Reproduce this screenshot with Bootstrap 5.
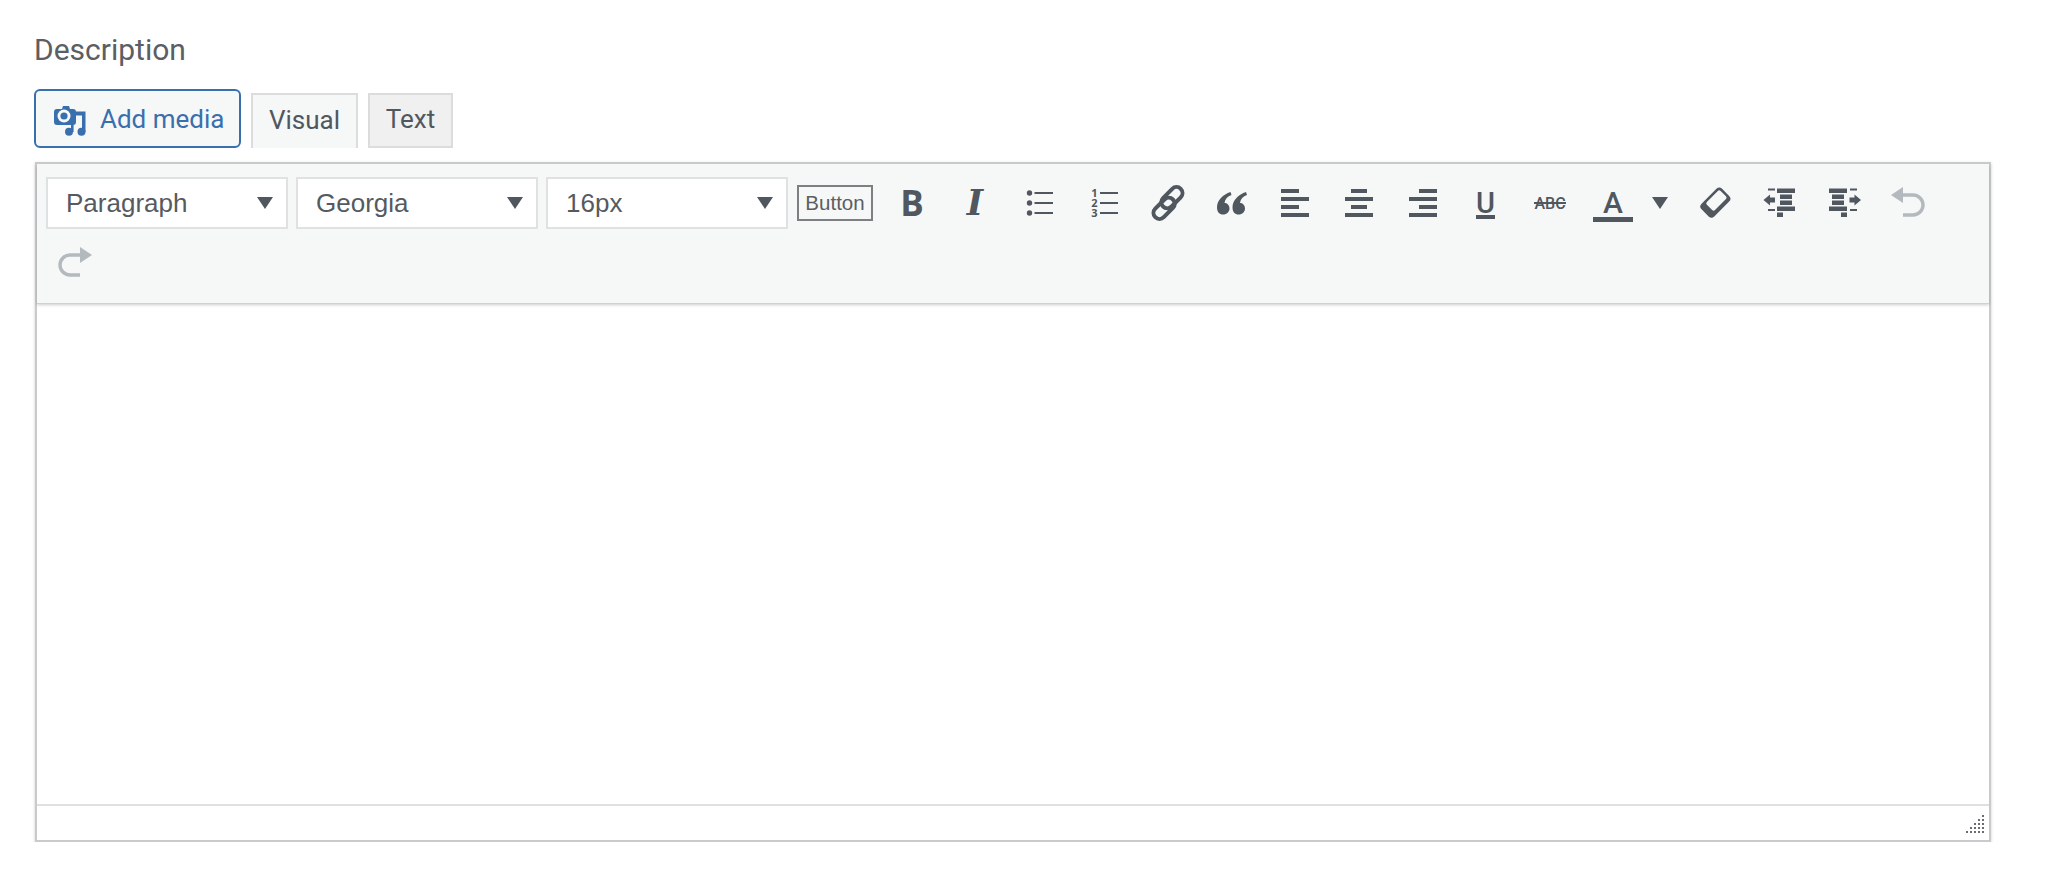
<!DOCTYPE html>
<html lang="en">
<head>
  <meta charset="UTF-8">
  <title>Description editor</title>
  <link href="https://cdn.jsdelivr.net/npm/bootstrap@5.3.0/dist/css/bootstrap.min.css" rel="stylesheet">
  <style>
    body {
      background: #fff;
      color: #50575e;
      font-family: Roboto, sans-serif;
    }
    .page-wrap {
      padding: 31px 57px 0 35px;
    }
    .field-label {
      font-size: 30px;
      line-height: 38px;
      margin-bottom: 20px;
      margin-left: -1px;
      color: #5b5e63;
    }
    .editor-tools {
      margin-bottom: 14px;
      height: 59px;
    }
    .add-media {
      width: 207px;
      height: 59px;
      margin-left: -1px;
      margin-right: 10px;
      padding: 2px 0 0 17px;
      background: #f6f7f7;
      border: 2px solid #3a6fae;
      border-radius: 6px;
      color: #3a6fae;
      font-size: 26px;
      gap: 13px;
    }
    .mode-tab {
      height: 55px;
      padding-bottom: 3px;
      font-size: 26px;
      border: 2px solid #dcdcde;
      color: #50575e;
      background: #f0f0f1;
    }
    .mode-tab.is-on {
      width: 107px;
      background: #f6f7f7;
      border-bottom: 0;
      margin-right: 10px;
    }
    .mode-tab.is-off {
      width: 85px;
    }
    .editor-box {
      border: 2px solid #c9cacc;
      box-shadow: 0 1px 3px rgba(0, 0, 0, .2);
      height: 680px;
    }
    .editor-bar {
      background: #f6f7f7;
      padding: 9px 9px 10px 9px;
      box-shadow: 0 1px 0 #cfd0d1, 0 2px 3px rgba(0, 0, 0, .2);
      height: 139px;
      position: relative;
    }
    .bar-item {
      height: 60px;
    }
    .fake-select {
      width: 242px;
      height: 52px;
      margin-right: 8px;
      padding: 0 13px 0 18px;
      background: #fff;
      border: 2px solid #e0e1e2;
      font-family: "Liberation Sans", Arial, sans-serif;
      font-size: 26px;
      color: #555a60;
    }
    .caret-down {
      width: 0;
      height: 0;
      border-left: 8px solid transparent;
      border-right: 8px solid transparent;
      border-top: 12px solid #50575e;
    }
    .plain-btn {
      width: 76px;
      height: 36px;
      margin: 0 7px 0 1px;
      border: 2px solid #7d7f82;
      font-family: "Liberation Sans", Arial, sans-serif;
      font-size: 20.5px;
      color: #5b5e63;
    }
    .tool-btn {
      width: 64px;
    }
    .tool-btn.with-caret {
      width: 100px;
      padding-left: 9px;
      gap: 19px;
    }
    .tool-btn svg {
      display: block;
    }
    .bold-glyph {
      font-family: "Open Sans", sans-serif;
      font-weight: 700;
      font-size: 35px;
      line-height: 40px;
      color: #50575e;
    }
    .italic-glyph {
      font-family: "DejaVu Serif", serif;
      font-weight: 700;
      font-style: italic;
      font-size: 35px;
      line-height: 40px;
      margin-right: 2px;
      color: #50575e;
    }
    .ol-nums {
      width: 8px;
      margin-right: 1px;
      font-family: "Open Sans", sans-serif;
      font-weight: 700;
      font-size: 11px;
      line-height: 10px;
      text-align: center;
      color: #50575e;
    }
    .ico-dark { fill: #50575e; }
    .ico-line { fill: none; stroke: #50575e; }
    .ico-off { fill: none; stroke: #b4b9be; stroke-width: 3.4; }
    .ico-off-fill { fill: #b4b9be; }
    .editor-body {
      height: 501px;
      background: #fff;
    }
    .editor-foot {
      height: 36px;
      border-top: 2px solid #dfe0e1;
      background: #fff;
      padding: 9px 5px 0 0;
    }
  </style>
</head>
<body>

<div class="page-wrap">
  <div class="field-label">Description</div>

  <div class="editor-tools d-flex align-items-end">
    <button type="button" class="add-media d-flex align-items-center">
      <svg width="34" height="32" viewBox="0 0 34 32">
        <g fill="#3a6fae">
          <path d="M6 5h3l1-3h6l1 3h3a3 3 0 0 1 3 3v10a3 3 0 0 1-3 3H4a3 3 0 0 1-3-3V8a3 3 0 0 1 3-3z"/>
          <path d="M22 7.500h10.500V28h-3.500V11.500h-7z"/>
          <circle cx="28.500" cy="27.700" r="4"/>
          <circle cx="16" cy="27.700" r="4"/>
          <rect x="18" y="20" width="2.600" height="8"/>
        </g>
        <circle cx="11" cy="12" r="6.500" fill="#f6f7f7"/>
        <circle cx="11" cy="12" r="3.600" fill="#3a6fae"/>
      </svg>
      <span>Add media</span>
    </button>
    <div class="mode-tab is-on d-flex align-items-center justify-content-center">Visual</div>
    <div class="mode-tab is-off d-flex align-items-center justify-content-center">Text</div>
  </div>

  <div class="editor-box">
    <div class="editor-bar d-flex flex-wrap align-content-start">
      <div class="bar-item d-flex align-items-center">
        <div class="fake-select d-flex align-items-center justify-content-between"><span>Paragraph</span><i class="caret-down"></i></div>
      </div>
      <div class="bar-item d-flex align-items-center">
        <div class="fake-select d-flex align-items-center justify-content-between"><span>Georgia</span><i class="caret-down"></i></div>
      </div>
      <div class="bar-item d-flex align-items-center">
        <div class="fake-select d-flex align-items-center justify-content-between"><span>16px</span><i class="caret-down"></i></div>
      </div>
      <div class="bar-item d-flex align-items-center">
        <div class="plain-btn d-flex align-items-center justify-content-center">Button</div>
      </div>

      <!-- bold -->
      <div class="bar-item tool-btn d-flex align-items-center justify-content-center">
        <span class="bold-glyph">B</span>
      </div>
      <!-- italic -->
      <div class="bar-item tool-btn d-flex align-items-center justify-content-center">
        <span class="italic-glyph">I</span>
      </div>
      <!-- bullet list -->
      <div class="bar-item tool-btn d-flex align-items-center justify-content-center">
        <svg width="40" height="40" viewBox="0 0 40 40">
          <g class="ico-dark"><circle cx="9.500" cy="10" r="2.700"/><circle cx="9.500" cy="20" r="2.700"/><circle cx="9.500" cy="30" r="2.700"/></g>
          <path class="ico-line" stroke-width="2" d="M14.500 10H33M14.500 20H33M14.500 30H33"/>
        </svg>
      </div>
      <!-- numbered list -->
      <div class="bar-item tool-btn d-flex align-items-center justify-content-center">
        <span class="ol-nums">1 2 3</span>
        <svg width="18" height="30" viewBox="0 0 18 30">
          <path class="ico-line" stroke-width="2" d="M0 5H18M0 15H18M0 25H18"/>
        </svg>
      </div>
      <!-- link -->
      <div class="bar-item tool-btn d-flex align-items-center justify-content-center">
        <svg width="40" height="40" viewBox="0 0 40 40">
          <g transform="rotate(-45 20 20)" class="ico-line" stroke-width="4">
            <rect x="1" y="15" width="25" height="12" rx="6"/>
            <rect x="14" y="13" width="25" height="12" rx="6"/>
          </g>
        </svg>
      </div>
      <!-- quote -->
      <div class="bar-item tool-btn d-flex align-items-center justify-content-center">
        <svg width="40" height="40" viewBox="0 0 40 40" class="ico-dark">
          <path d="M18.500 9C11 11.500 5 17 5 24.500 5 29 7.500 31.500 11 31.500c4 0 6.500-2.700 6.500-6 0-3.500-2.500-5.500-5-5.500.5-4 3-6.500 7-8z"/>
          <path d="M34 9c-7.500 2.500-13.500 8-13.500 15.500 0 4.500 2.500 7 6 7 4 0 6.500-2.700 6.500-6 0-3.500-2.500-5.500-5-5.500.5-4 3-6.500 7-8z"/>
        </svg>
      </div>
      <!-- align left -->
      <div class="bar-item tool-btn d-flex align-items-center justify-content-center">
        <svg width="40" height="40" viewBox="0 0 40 40" class="ico-dark">
          <rect x="5" y="6" width="18" height="4"/><rect x="5" y="14" width="28" height="4"/><rect x="5" y="22" width="18" height="4"/><rect x="5" y="30" width="28" height="4"/>
        </svg>
      </div>
      <!-- align center -->
      <div class="bar-item tool-btn d-flex align-items-center justify-content-center">
        <svg width="40" height="40" viewBox="0 0 40 40" class="ico-dark">
          <rect x="11" y="6" width="16" height="4"/><rect x="5" y="14" width="28" height="4"/><rect x="11" y="22" width="16" height="4"/><rect x="5" y="30" width="28" height="4"/>
        </svg>
      </div>
      <!-- align right -->
      <div class="bar-item tool-btn d-flex align-items-center justify-content-center">
        <svg width="40" height="40" viewBox="0 0 40 40" class="ico-dark">
          <rect x="15" y="6" width="18" height="4"/><rect x="5" y="14" width="28" height="4"/><rect x="15" y="22" width="18" height="4"/><rect x="5" y="30" width="28" height="4"/>
        </svg>
      </div>
      <!-- underline -->
      <div class="bar-item tool-btn d-flex align-items-center justify-content-center">
        <svg width="40" height="40" viewBox="0 0 40 40" class="ico-dark">
          <text x="17.500" y="30" text-anchor="middle" font-family="Roboto, sans-serif" font-weight="500" font-size="29">U</text>
          <rect x="8" y="32" width="19" height="4"/>
        </svg>
      </div>
      <!-- strike -->
      <div class="bar-item tool-btn d-flex align-items-center justify-content-center">
        <svg width="40" height="40" viewBox="0 0 40 40" class="ico-dark">
          <text x="18" y="26" text-anchor="middle" font-family="Roboto, sans-serif" font-weight="500" font-size="16">ABC</text>
          <rect x="2" y="19" width="32" height="2"/>
        </svg>
      </div>
      <!-- text colour with dropdown -->
      <div class="bar-item tool-btn with-caret d-flex align-items-center">
        <svg width="40" height="40" viewBox="0 0 40 40" class="ico-dark">
          <text x="20" y="30" text-anchor="middle" font-family="Roboto, sans-serif" font-weight="500" font-size="30">A</text>
          <rect x="0" y="34" width="40" height="5"/>
        </svg>
        <i class="caret-down"></i>
      </div>
      <!-- clear formatting -->
      <div class="bar-item tool-btn d-flex align-items-center justify-content-center">
        <svg width="40" height="40" viewBox="0 0 40 40">
          <g transform="rotate(-45 19 20)">
            <rect x="5" y="11" width="29" height="18" rx="4" class="ico-dark"/>
            <rect x="12" y="13.500" width="19.500" height="11.500" rx="2" fill="#f6f7f7"/>
          </g>
        </svg>
      </div>
      <!-- outdent -->
      <div class="bar-item tool-btn d-flex align-items-center justify-content-center">
        <svg width="40" height="40" viewBox="0 0 40 40" class="ico-dark">
          <rect x="17" y="5.500" width="18" height="4.500"/><rect x="20" y="11.500" width="12" height="4.500"/><rect x="20" y="17.500" width="12" height="4.500"/><rect x="17" y="23.500" width="18" height="4.500"/><rect x="17" y="29.500" width="6" height="4.500"/>
          <rect x="8" y="5.500" width="7" height="2"/><rect x="8" y="26" width="7" height="2"/>
          <path d="M3.500 17l6.500-5.500v3h5v5h-5v3z"/>
        </svg>
      </div>
      <!-- indent -->
      <div class="bar-item tool-btn d-flex align-items-center justify-content-center">
        <svg width="40" height="40" viewBox="0 0 40 40" class="ico-dark">
          <rect x="5" y="5.500" width="18" height="4.500"/><rect x="8" y="11.500" width="12" height="4.500"/><rect x="8" y="17.500" width="12" height="4.500"/><rect x="5" y="23.500" width="18" height="4.500"/><rect x="17" y="29.500" width="6" height="4.500"/>
          <rect x="26" y="5.500" width="7" height="2"/><rect x="26" y="26" width="7" height="2"/>
          <path d="M37 17l-6.500-5.500v3h-5v5h5v3z"/>
        </svg>
      </div>
      <!-- undo -->
      <div class="bar-item tool-btn d-flex align-items-center justify-content-center">
        <svg width="40" height="40" viewBox="0 0 40 40">
          <path class="ico-off-fill" d="M3 12l12-8v16z"/>
          <path class="ico-off" d="M15 12h10a10 10 0 0 1 0 20h-10"/>
        </svg>
      </div>
      <!-- redo -->
      <div class="bar-item tool-btn d-flex align-items-center justify-content-center">
        <svg width="40" height="40" viewBox="0 0 40 40">
          <path class="ico-off-fill" d="M34 12l-12-8v16z"/>
          <path class="ico-off" d="M22 12h-10a10 10 0 0 0 0 20h10"/>
        </svg>
      </div>
    </div>

    <div class="editor-body"></div>

    <div class="editor-foot d-flex justify-content-end">
      <svg width="18" height="18" viewBox="0 0 18 18" fill="#6b6d70">
        <rect x="16" y="0" width="2" height="2"/>
        <rect x="12" y="4" width="2" height="2"/><rect x="16" y="4" width="2" height="2"/>
        <rect x="8" y="8" width="2" height="2"/><rect x="12" y="8" width="2" height="2"/><rect x="16" y="8" width="2" height="2"/>
        <rect x="4" y="12" width="2" height="2"/><rect x="8" y="12" width="2" height="2"/><rect x="12" y="12" width="2" height="2"/><rect x="16" y="12" width="2" height="2"/>
        <rect x="0" y="16" width="2" height="2"/><rect x="4" y="16" width="2" height="2"/><rect x="8" y="16" width="2" height="2"/><rect x="12" y="16" width="2" height="2"/><rect x="16" y="16" width="2" height="2"/>
      </svg>
    </div>
  </div>
</div>

<script src="https://cdn.jsdelivr.net/npm/bootstrap@5.3.0/dist/js/bootstrap.bundle.min.js"></script>
</body>
</html>
